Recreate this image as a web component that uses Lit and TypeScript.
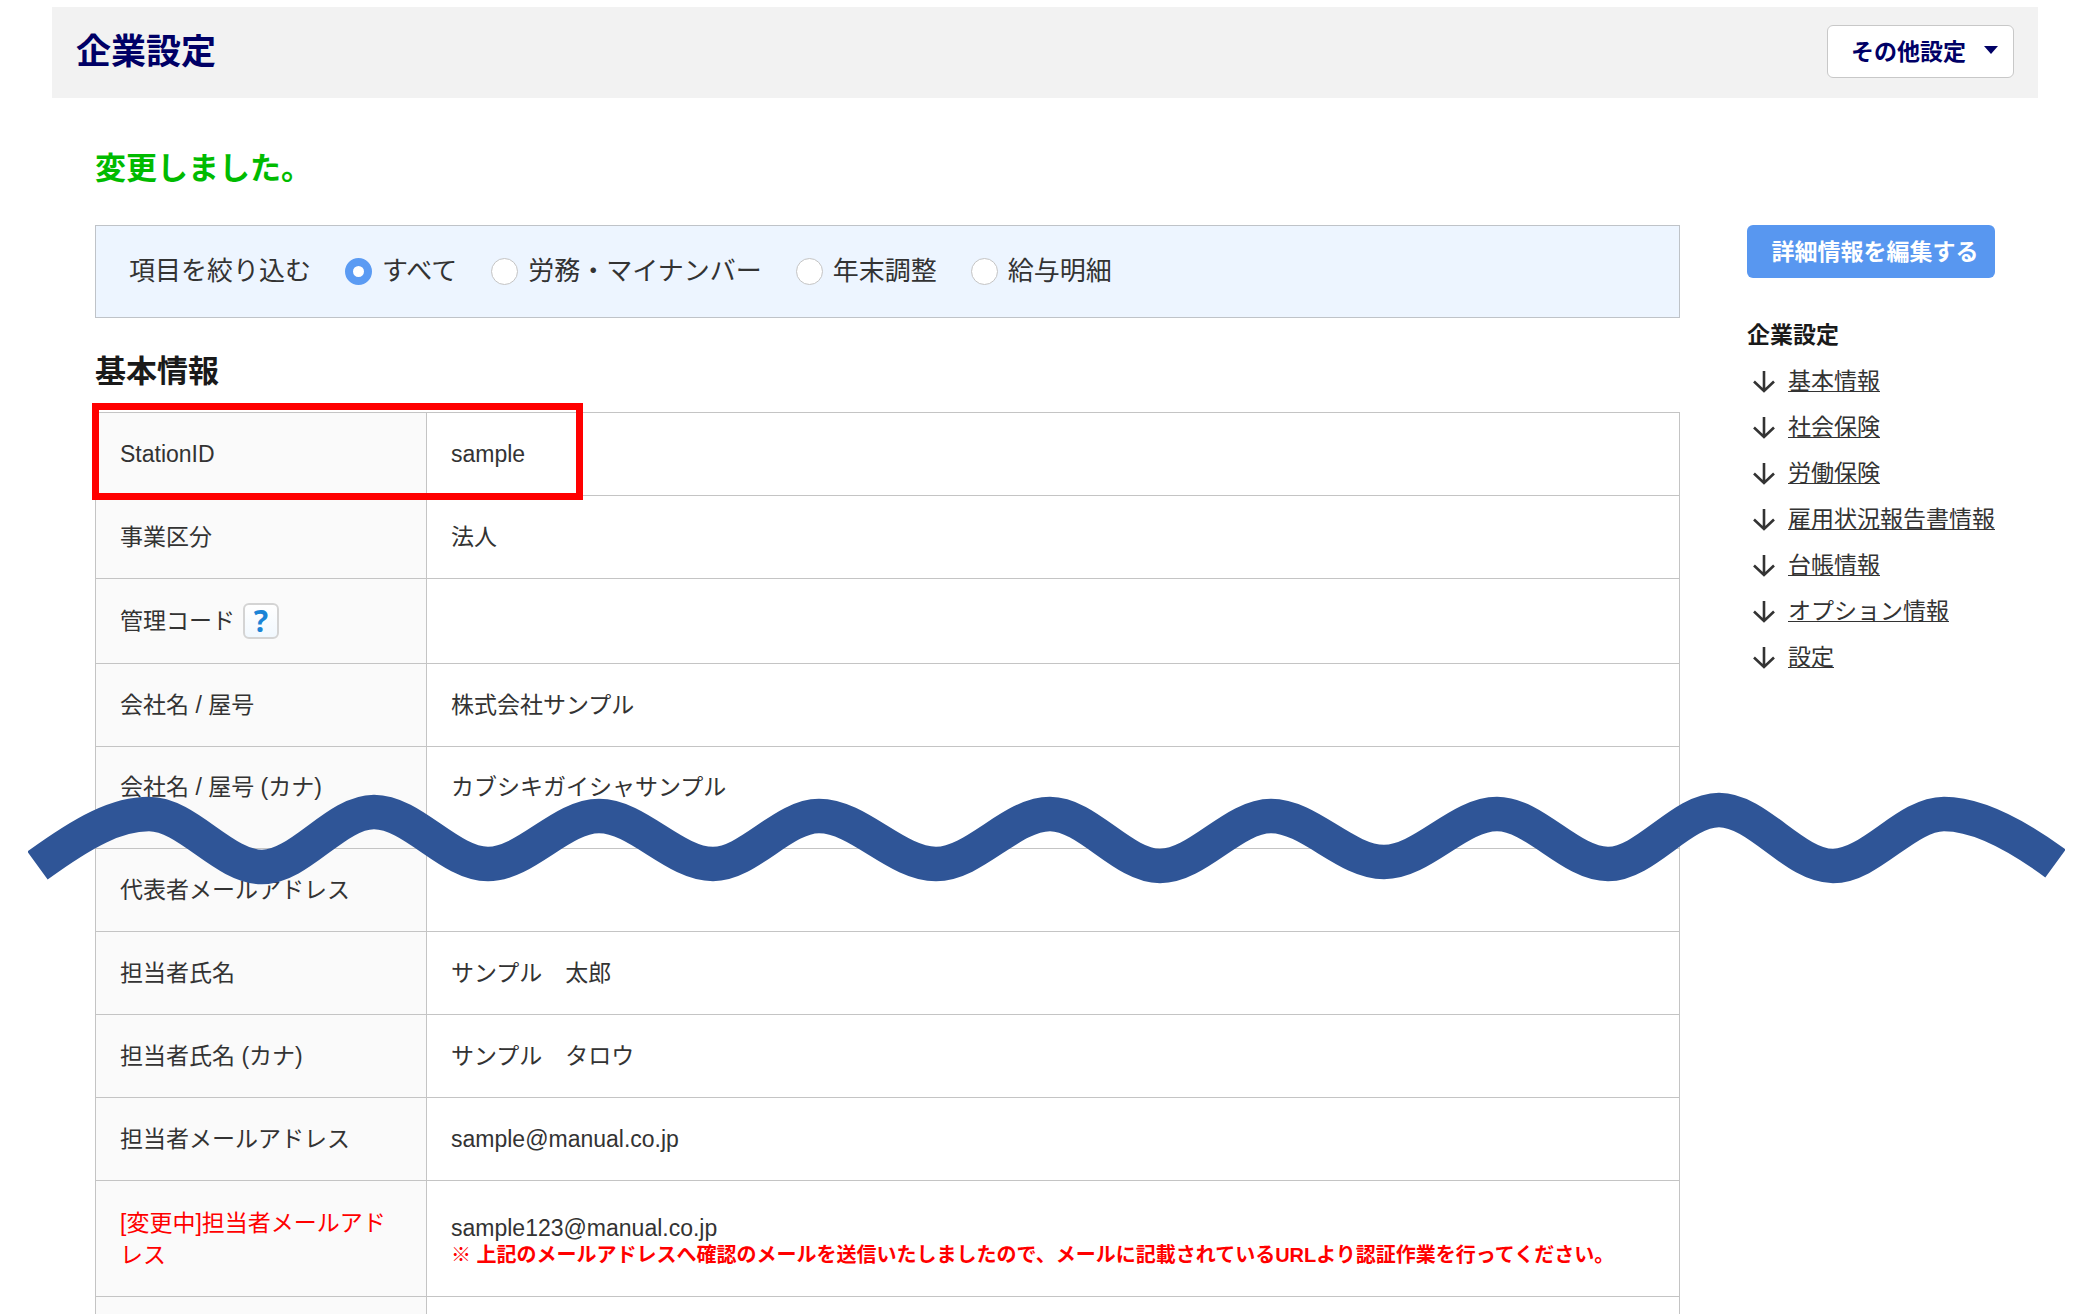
import { LitElement, html, css, svg, nothing } from "lit";
import { customElement, property, state } from "lit/decorators.js";
import { classMap } from "lit/directives/class-map.js";

interface Row {
  label: string;
  value?: string;
  help?: boolean;
  pending?: boolean;
  tall?: boolean;
  note?: string;
}

const ROWS: Row[] = [
  { label: "StationID", value: "sample" },
  { label: "事業区分", value: "法人" },
  { label: "管理コード", help: true },
  { label: "会社名 / 屋号", value: "株式会社サンプル" },
  { label: "会社名 / 屋号 (カナ)", value: "カブシキガイシャサンプル", tall: true },
  { label: "代表者メールアドレス" },
  { label: "担当者氏名", value: "サンプル　太郎" },
  { label: "担当者氏名 (カナ)", value: "サンプル　タロウ" },
  { label: "担当者メールアドレス", value: "sample@manual.co.jp" },
  {
    label: "[変更中]担当者メールアドレス",
    value: "sample123@manual.co.jp",
    pending: true,
    note: "※ 上記のメールアドレスへ確認のメールを送信いたしましたので、メールに記載されているURLより認証作業を行ってください。",
  },
  { label: "" },
];

const FILTERS = ["すべて", "労務・マイナンバー", "年末調整", "給与明細"];

const SECTIONS = [
  "基本情報",
  "社会保険",
  "労働保険",
  "雇用状況報告書情報",
  "台帳情報",
  "オプション情報",
  "設定",
];

/** Crests and troughs of the omission wave, left to right. */
const WAVE: [number, number][] = [
  [149, 814], [262, 867], [374, 812], [488, 864], [599, 816], [713, 864],
  [819, 816], [936, 864], [1050, 814], [1160, 866], [1271, 816], [1384, 862],
  [1497, 814], [1608, 864], [1719, 810], [1833, 866], [1944, 814],
];

function wavePath(): string {
  let d = `M37.5 865.5 C85 831 117 814 ${WAVE[0][0]} ${WAVE[0][1]}`;
  for (let i = 1; i < WAVE.length; i++) {
    const [x0, y0] = WAVE[i - 1];
    const [x1, y1] = WAVE[i];
    const h = (x1 - x0) * 0.34;
    d += ` C${x0 + h} ${y0} ${x1 - h} ${y1} ${x1} ${y1}`;
  }
  return `${d} C1976 814 2014 833 2055.5 863.5`;
}

@customElement("filter-bar")
export class FilterBar extends LitElement {
  @state() private selected = 0;

  static styles = css`
    .bar {
      display: flex;
      align-items: center;
      flex-wrap: wrap;
      gap: 8px 34px;
      margin: 0;
      padding: 24px 33px;
      border: 1px solid #bfc3c8;
      background: #edf5ff;
      font-size: 26px;
      line-height: 43px;
      color: #333;
    }
    .option {
      display: flex;
      align-items: center;
      gap: 10px;
      cursor: pointer;
    }
    .radio {
      appearance: none;
      box-sizing: border-box;
      width: 27px;
      height: 27px;
      margin: 0;
      border: 1px solid #c4c4c4;
      border-radius: 50%;
      background: #fff;
    }
    .radio:checked {
      border: 8px solid #5b9bf3;
    }
  `;

  render() {
    return html`
      <div class="bar" role="radiogroup" aria-labelledby="caption">
        <span id="caption">項目を絞り込む</span>
        ${FILTERS.map(
          (name, i) => html`
            <label class="option">
              <input
                class="radio"
                type="radio"
                name="filter"
                .checked=${this.selected === i}
                @change=${() => (this.selected = i)}
              />${name}
            </label>
          `,
        )}
      </div>
    `;
  }
}

@customElement("info-table")
export class InfoTable extends LitElement {
  @property({ attribute: false }) rows: Row[] = [];

  static styles = css`
    :host {
      display: block;
      position: relative;
    }
    .table {
      width: 100%;
      border-collapse: collapse;
      table-layout: fixed;
      font-size: 23px;
      line-height: 32px;
      color: #333;
    }
    .label-col {
      width: 331px;
    }
    .label,
    .value {
      height: 82px;
      padding: 0 24px;
      border: 1px solid #c4c4c4;
      text-align: left;
      font-weight: 400;
      vertical-align: middle;
    }
    .label {
      background: #fafafa;
    }
    .helped .label,
    .helped .value {
      height: 84px;
    }
    .tall .label,
    .tall .value {
      height: 80px;
      padding-bottom: 21px;
    }
    .double .label,
    .double .value {
      height: 115px;
    }
    .pending {
      color: #f00;
    }
    .with-help {
      display: flex;
      align-items: center;
      gap: 8px;
    }
    .help {
      width: 36px;
      height: 36px;
      padding: 0;
      border: 2px solid #d4d4d4;
      border-radius: 6px;
      background: linear-gradient(#fff, #f1f8fe);
      color: #1a84d6;
      font: bold 30px/32px "Noto Sans", sans-serif;
    }
    .note {
      margin: 0;
      color: #f00;
      font-size: 20px;
      font-weight: 700;
      line-height: 22px;
    }
    .highlight {
      position: absolute;
      left: -3px;
      top: -9px;
      box-sizing: border-box;
      width: 491px;
      height: 97px;
      border: 7px solid #f00;
      pointer-events: none;
    }
  `;

  render() {
    return html`
      <table class="table">
        <colgroup>
          <col class="label-col" />
          <col />
        </colgroup>
        <tbody>
          ${this.rows.map(
            (row) => html`
              <tr class=${classMap({ helped: !!row.help, tall: !!row.tall, double: !!row.note })}>
                <th class=${classMap({ label: true, pending: !!row.pending })} scope="row">
                  ${row.help
                    ? html`<div class="with-help">
                        ${row.label}<button class="help" type="button" title="ヘルプ">?</button>
                      </div>`
                    : row.label}
                </th>
                <td class="value">
                  ${row.value ?? nothing}
                  ${row.note ? html`<p class="note">${row.note}</p>` : nothing}
                </td>
              </tr>
            `,
          )}
        </tbody>
      </table>
      <div class="highlight"></div>
    `;
  }
}

@customElement("section-nav")
export class SectionNav extends LitElement {
  static styles = css`
    :host {
      display: block;
      font-size: 23px;
      line-height: 32px;
      color: #333;
    }
    .edit {
      display: block;
      width: 100%;
      height: 53px;
      padding: 0 0 0 8px;
      border: 0;
      border-radius: 6px;
      background: #5897f0;
      color: #fff;
      font: inherit;
      font-weight: 700;
    }
    .title {
      margin: 41px 0 14px;
      font-size: 23px;
      line-height: 32px;
      color: #1a1a1a;
    }
    .list {
      display: grid;
      gap: 14px;
      margin: 0;
      padding: 0;
      list-style: none;
    }
    .item {
      display: flex;
      align-items: center;
      gap: 12px;
      padding-left: 5px;
      white-space: nowrap;
    }
    .arrow {
      width: 24px;
      height: 24px;
    }
    .link {
      color: #333;
      text-decoration: underline;
      text-underline-offset: 2px;
      text-decoration-thickness: 1px;
    }
  `;

  render() {
    return html`
      <button class="edit" type="button">詳細情報を編集する</button>
      <h3 class="title">企業設定</h3>
      <ul class="list">
        ${SECTIONS.map(
          (name) => html`
            <li class="item">
              <svg class="arrow" viewBox="0 0 24 24" fill="none" stroke="#333" stroke-width="2.6" aria-hidden="true">
                <path d="M12 2v20M2 12.5l10 9.5 10-9.5" />
              </svg>
              <a class="link" href="#${name}">${name}</a>
            </li>
          `,
        )}
      </ul>
    `;
  }
}

@customElement("app-root")
export class AppRoot extends LitElement {
  static styles = css`
    :host {
      display: block;
      position: relative;
      box-sizing: border-box;
      height: 100vh;
      overflow: hidden;
      padding: 7px 40px 0 52px;
      background: #fff;
      font-family: "Liberation Sans", "Noto Sans CJK JP", sans-serif;
      color: #1a1a1a;
    }
    .header {
      display: flex;
      align-items: center;
      justify-content: space-between;
      box-sizing: border-box;
      height: 91px;
      padding: 0 24px 2px;
      background: #f2f2f2;
      color: #006;
    }
    .page-title {
      margin: 0;
      font-size: 35px;
      line-height: 48px;
    }
    .more {
      display: flex;
      align-items: center;
      gap: 18px;
      height: 53px;
      padding: 0 15px 3px 23px;
      border: 1px solid #c8c8c8;
      border-radius: 6px;
      background: #fff;
      color: #006;
      font: inherit;
      font-size: 23px;
      font-weight: 700;
    }
    .caret {
      width: 14px;
      height: 8px;
    }
    .main {
      padding: 49px 43px 0;
    }
    .message {
      margin: 0 0 34px;
      color: #0b0;
      font-size: 31px;
      font-weight: 700;
      line-height: 44px;
    }
    .columns {
      display: grid;
      grid-template-columns: minmax(0, 1fr) 248px;
      gap: 67px;
    }
    .section-title {
      margin: 32px 0 18px;
      font-size: 31px;
      line-height: 44px;
    }
    .wave {
      position: absolute;
      left: 28px;
      top: 790px;
      width: calc(100% - 41px);
      height: 100px;
      pointer-events: none;
    }
  `;

  render() {
    return html`
      <header class="header">
        <h1 class="page-title">企業設定</h1>
        <button class="more" type="button" aria-haspopup="menu">
          その他設定
          <svg class="caret" viewBox="0 0 14 8" aria-hidden="true"><path d="M0 0h14L7 8z" fill="#006" /></svg>
        </button>
      </header>
      <main class="main">
        <p class="message" role="status">変更しました。</p>
        <div class="columns">
          <section>
            <filter-bar></filter-bar>
            <h2 class="section-title">基本情報</h2>
            <info-table .rows=${ROWS}></info-table>
          </section>
          <section-nav></section-nav>
        </div>
      </main>
      <svg class="wave" viewBox="28 790 2037 100" preserveAspectRatio="none" aria-hidden="true">
        ${svg`<path d=${wavePath()} fill="none" stroke="#2f5597" stroke-width="34.5" />`}
      </svg>
    `;
  }
}
